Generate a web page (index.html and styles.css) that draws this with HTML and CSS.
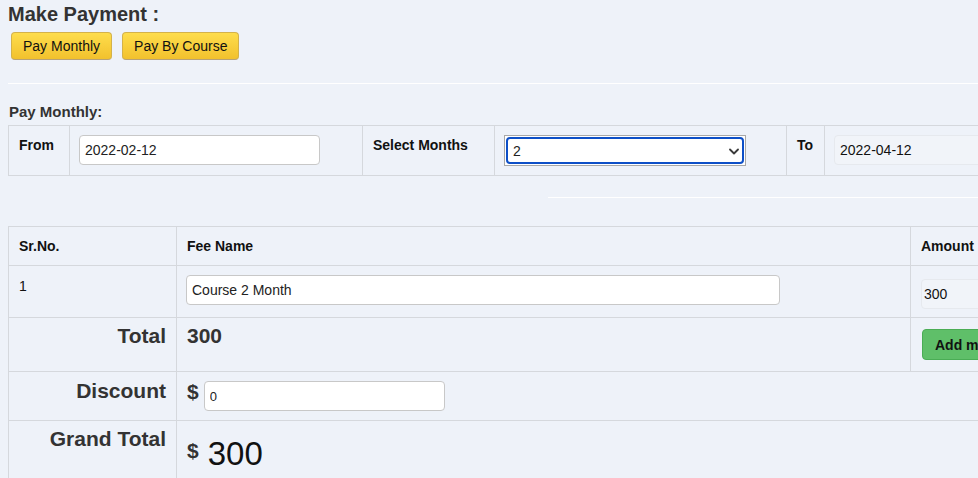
FILE: index.html
```html
<!DOCTYPE html>
<html>
<head>
<meta charset="utf-8">
<title>Make Payment</title>
<link rel="stylesheet" href="styles.css">
</head>
<body>
<div class="page">
  <h4 class="title">Make Payment :</h4>
  <div class="btn-row">
    <button class="btn-yellow">Pay Monthly</button>
    <button class="btn-yellow">Pay By Course</button>
  </div>
  <div class="rule"></div>

  <h5 class="subtitle">Pay Monthly:</h5>
  <table class="grid months">
    <colgroup>
      <col class="c-from"><col class="c-in"><col class="c-sel"><col class="c-in2"><col class="c-to"><col class="c-in">
    </colgroup>
    <tr>
      <th>From</th>
      <td><input class="field" type="text" value="2022-02-12"></td>
      <th>Select Months</th>
      <td>
        <span class="select-wrap">
          <span class="select-focus">
            <span class="select-val">2</span>
            <svg class="chev" width="10" height="7" viewBox="0 0 10 7"><polyline points="1,1.5 5,5.5 9,1.5" fill="none" stroke="#3a3a3a" stroke-width="1.8" stroke-linecap="round" stroke-linejoin="round"/></svg>
          </span>
        </span>
      </td>
      <th>To</th>
      <td><input class="field ro" type="text" value="2022-04-12" readonly></td>
    </tr>
  </table>

  <div class="rule rule-right"></div>

  <table class="grid fees">
    <colgroup>
      <col class="c-sr"><col class="c-fee"><col class="c-amt">
    </colgroup>
    <tr class="head">
      <th>Sr.No.</th>
      <th>Fee Name</th>
      <th>Amount</th>
    </tr>
    <tr class="item">
      <td class="sr">1</td>
      <td class="fee-cell"><input class="field wide" type="text" value="Course 2 Month"></td>
      <td class="amt-cell"><input class="field ro amt" type="text" value="300" readonly></td>
    </tr>
    <tr class="total">
      <td class="lbl">Total</td>
      <td class="val">300</td>
      <td class="btn-cell"><button class="btn-green">Add more</button></td>
    </tr>
    <tr class="discount">
      <td class="lbl">Discount</td>
      <td colspan="2" class="disc-cell"><div class="money"><span class="cur">$</span><input class="field disc" type="text" value="0"></div></td>
    </tr>
    <tr class="grand">
      <td class="lbl">Grand Total</td>
      <td colspan="2" class="grand-cell"><div class="money"><span class="cur cur-g">$</span><span class="big">300</span></div></td>
    </tr>
  </table>
</div>
</body>
</html>
```

FILE: styles.css
```css
html, body {
  margin: 0;
  padding: 0;
  background: #eef2f9;
  overflow: hidden;
}
body {
  font-family: "Liberation Sans", Arial, Helvetica, sans-serif;
  color: #333;
  font-size: 14px;
}
.page {
  padding: 2px 0 0 8px;
  width: 1300px;
}
.title {
  margin: 0;
  font-size: 20px;
  line-height: 24px;
  font-weight: bold;
  color: #333;
}
.btn-row {
  margin-top: 6px;
  display: flex;
  gap: 10px;
  padding-left: 3px;
}
.btn-yellow {
  font-family: "Liberation Sans", Arial, sans-serif;
  font-size: 14px;
  line-height: 18px;
  padding: 4px 11px;
  height: 28px;
  color: #111;
  background: linear-gradient(#fedd4c, #f2c12d);
  border: 1px solid #d4b24a;
  border-bottom-color: #b8a276;
  border-radius: 4px;
}
.rule {
  margin-top: 23px;
  height: 0;
  border-top: 1px solid #ffffff;
  width: 970px;
}
.rule-right {
  margin-top: 21px;
  margin-left: 540px;
  width: 430px;
}
.subtitle {
  margin: 18px 0 0 1px;
  font-size: 15px;
  line-height: 20px;
  font-weight: bold;
  color: #333;
}
.grid {
  border-collapse: collapse;
  table-layout: fixed;
}
.grid th, .grid td {
  border: 1px solid #d5d8dd;
  text-align: left;
  vertical-align: top;
  color: #111;
}
.grid th {
  font-weight: bold;
  font-size: 14px;
  line-height: 20px;
}
.months {
  margin-top: 3px;
  width: 1109px;
}
.months th, .months td {
  padding: 9px 10px;
}
.c-from { width: 61px; }
.c-in { width: 293px; }
.c-sel { width: 132px; }
.c-in2 { width: 292px; }
.c-to { width: 38px; }

.field {
  box-sizing: border-box;
  display: block;
  width: 241px;
  height: 30px;
  margin: 0 0 0 -1px;
  padding: 0 5px;
  font-family: "Liberation Sans", Arial, sans-serif;
  font-size: 14px;
  color: #222;
  background: #fff;
  border: 1px solid #c8c8c8;
  border-radius: 4px;
}
.field.ro {
  background: #f1f4f9;
  border-color: #e6e9ee;
  color: #111;
}
.select-wrap {
  display: block;
  box-sizing: border-box;
  width: 242px;
  height: 31px;
  margin: 0 0 0 -1px;
  border: 1px solid #a8a8a8;
  padding: 1px;
  background: #fff;
}
.select-focus {
  box-sizing: border-box;
  display: flex;
  align-items: center;
  justify-content: space-between;
  height: 27px;
  border: 2px solid #0d4fc7;
  border-radius: 4px;
  padding: 0 3px 0 5px;
  font-size: 14px;
  color: #222;
}
.chev { display: block; margin-top: 1px; }

.fees {
  margin-top: 28px;
  width: 1102px;
}
.c-sr { width: 168px; }
.c-fee { width: 734px; }
.c-amt { width: 200px; }
.fees .head th {
  padding: 9px 10px;
}
.fees .item td {
  font-size: 14px;
  line-height: 20px;
}
.fees .item .sr { padding: 10px 10px 0 10px; }
.fees .item .fee-cell { padding: 9px 10px 12px 10px; }
.fees .item .amt-cell { padding: 13px 10px 8px 10px; }
.field.wide { width: 594px; }
.field.amt { padding-left: 2px; margin-left: 0; }

.lbl {
  text-align: right !important;
  font-size: 21px;
  line-height: 24px;
  font-weight: bold;
  color: #333 !important;
}
.val {
  font-size: 21px;
  line-height: 24px;
  font-weight: bold;
  color: #333 !important;
}
.fees .total .lbl, .fees .total .val {
  padding: 6px 10px 0 10px;
}
.fees .total .btn-cell {
  padding: 11px 0 11px 11px;
}
.btn-green {
  display: block;
  height: 31px;
  padding: 0 12px;
  font-family: "Liberation Sans", Arial, sans-serif;
  font-size: 14px;
  font-weight: bold;
  color: #111;
  background: #5fbf69;
  border: 1px solid #4aad55;
  border-radius: 4px;
  white-space: nowrap;
}
.fees .discount .lbl { padding: 7px 10px 0 10px; }
.fees .discount .disc-cell { padding: 9px 10px; }
.money {
  display: flex;
  align-items: flex-start;
}
.cur {
  font-size: 21px;
  line-height: 24px;
  font-weight: bold;
  color: #333;
  margin-top: -1px;
  margin-right: 5px;
}
.field.disc {
  font-size: 13px;
  padding-left: 5px;
  margin-left: 0;
}
.fees .grand .lbl { padding: 6px 10px 0 10px; }
.fees .grand .grand-cell { padding: 9px 10px 20px 10px; }
.cur-g {
  margin-top: 9px;
  margin-right: 9px;
}
.big {
  font-size: 33px;
  line-height: 36px;
  color: #111;
  margin-top: 6px;
}
```
